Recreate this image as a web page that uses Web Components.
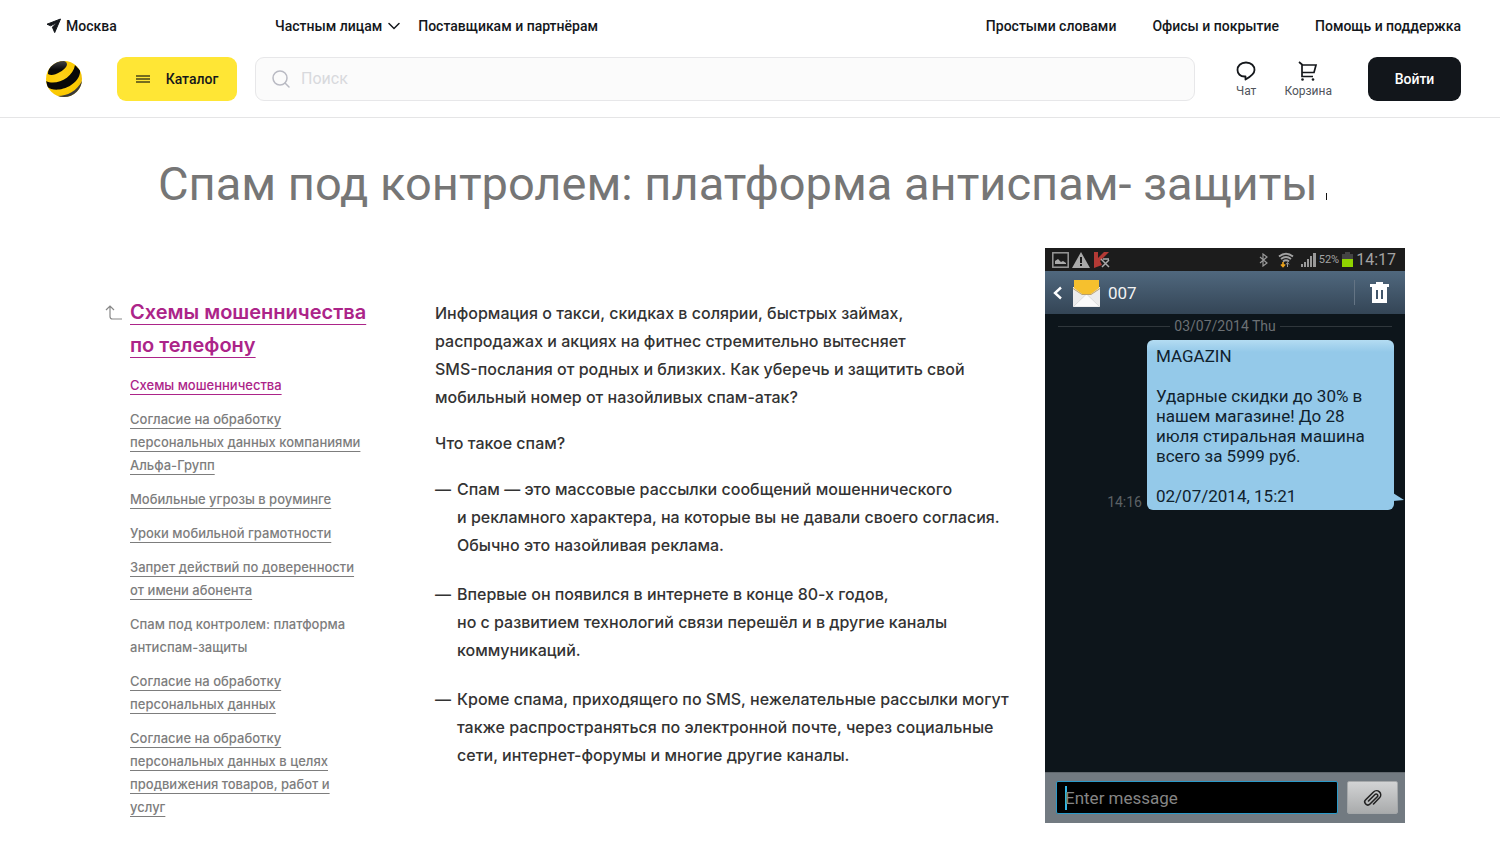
<!DOCTYPE html>
<html lang="ru">
<head>
<meta charset="utf-8">
<meta name="viewport" content="width=device-width, initial-scale=1">
<title>Спам под контролем: платформа антиспам-защиты</title>
<style>
body { margin: 0; background: #fff; color: #1f1f1f; font-family: Inter, "Liberation Sans", sans-serif; }
</style>
</head>
<body>
<site-header></site-header>
<main>
  <page-title>Спам под контролем: платформа антиспам- защиты</page-title>
  <page-columns>
    <side-nav slot="aside"></side-nav>
    <article-text></article-text>
    <phone-screen slot="media"></phone-screen>
  </page-columns>
</main>
<script>
function define(name, html) {
  const template = document.createElement('template');
  template.innerHTML = html;
  customElements.define(name, class extends HTMLElement {
    constructor() {
      super();
      this.attachShadow({ mode: 'open' }).append(template.content.cloneNode(true));
    }
  });
}

define('bee-logo', `
<style>:host{display:block;width:36px;height:36px}svg{display:block}</style>
<svg width="36" height="36" viewBox="0 0 36 36" role="img" aria-label="билайн">
  <defs>
    <clipPath id="c"><circle cx="18" cy="18" r="18"/></clipPath>
    <radialGradient id="y" cx=".42" cy=".45" r=".6"><stop offset="0" stop-color="#ffd21a"/><stop offset=".8" stop-color="#fbc900"/><stop offset="1" stop-color="#e9ba10"/></radialGradient>
    <linearGradient id="k" x1="0" y1="0" x2="0" y2="1"><stop offset="0" stop-color="#444"/><stop offset=".6" stop-color="#0a0a0a"/></linearGradient>
  </defs>
  <g clip-path="url(#c)">
    <rect width="36" height="36" fill="url(#y)"/>
    <path d="M2 13C2 5 9 -1 18 0C24 2 20 8 14 11C9 14 5 15 2 13Z" fill="url(#k)"/>
    <path d="M0 20C10 25 27 17 29 4L34 9C35 18 25 27 13 28.500C8 29 4 28 1 26Z" fill="#080808"/>
    <path d="M12 35C21 35 31 30 36 20L36 36H12Z" fill="#3a3a3a"/>
  </g>
</svg>`);

define('icon-link', `
<style>
:host{display:block}
a{display:flex;flex-direction:column;align-items:center;gap:2px;padding-top:2px;color:#50545b;font-size:12px;font-weight:400;line-height:16px;text-decoration:none}
</style>
<a href="#"><slot name="icon"></slot><slot></slot></a>`);

define('site-header', `
<style>
:host{display:block;padding:16px 39px 16px 46px;border-bottom:1px solid #e5e5e6;color:#14171b;font-family:Roboto,sans-serif;font-weight:500}
a{color:inherit;text-decoration:none;display:flex;align-items:center;white-space:nowrap}
svg{display:block;flex:none}
.top{display:flex;align-items:center;font-size:14px;line-height:20px}
.city{width:229px;gap:4px}
.left,.right{display:flex}
.left{gap:18px}
.left a{gap:6px}
.right{margin-left:auto;gap:36px}
.bar{display:flex;align-items:center;margin-top:21px}
button{display:flex;align-items:center;justify-content:center;height:44px;box-sizing:border-box;border:0;border-radius:9px;font:500 14px/20px Roboto,sans-serif;cursor:pointer}
.catalog{width:120px;margin-left:35px;gap:16px;background:#ffe635;color:#14171b}
.login{width:93px;background:#12161b;color:#fff}
.search{display:flex;align-items:center;gap:11px;flex:1;min-width:0;height:44px;box-sizing:border-box;margin:0 41px 0 18px;padding:0 16px;border:1px solid #e7e7e9;border-radius:9px;background:#fbfbfb}
input{flex:1;min-width:0;border:0;padding:0;background:none;outline:0;font:400 16px/20px Roboto,sans-serif;color:#14171b}
input::placeholder{color:#d8d9dd;opacity:1}
.tools{display:flex;gap:28px;margin-right:36px}
</style>
<header>
  <div class="top">
    <a class="city" href="#"><svg width="16" height="16" viewBox="0 0 16 16"><path d="M14.500 1L1 6.200l3.600 1.600L11 4.500 6.400 9.200 8.700 14.600Z" fill="#14171b" stroke="#14171b" stroke-linejoin="round"/></svg>Москва</a>
    <nav class="left" aria-label="Разделы">
      <a href="#">Частным лицам <svg width="12" height="8" viewBox="0 0 12 8"><path d="M1 1.500l5 5 5-5" fill="none" stroke="#14171b" stroke-width="1.500" stroke-linecap="round"/></svg></a>
      <a href="#">Поставщикам и партнёрам</a>
    </nav>
    <nav class="right" aria-label="Помощь"><a href="#">Простыми словами</a><a href="#">Офисы и покрытие</a><a href="#">Помощь и поддержка</a></nav>
  </div>
  <div class="bar">
    <a href="#"><bee-logo></bee-logo></a>
    <button class="catalog"><svg width="14" height="8" viewBox="0 0 14 8"><path d="M0 1h14M0 4h14M0 7h14" stroke="#4a4617" stroke-width="1.600"/></svg>Каталог</button>
    <label class="search"><svg width="18" height="18" viewBox="0 0 18 18" fill="none" stroke="#b9bac3" stroke-width="1.500" stroke-linecap="round"><circle cx="8" cy="8" r="7"/><path d="M13 13l4 4"/></svg><input type="search" placeholder="Поиск" aria-label="Поиск"></label>
    <div class="tools">
      <icon-link><svg slot="icon" width="20" height="20" viewBox="0 0 20 20"><path d="M9.500 18.500v-3H8.500C4.500 15.500 1.500 13 1.500 9s3-7.500 8.500-7.500 8.500 3.500 8.500 7.500-4.500 7-9 9.500Z" fill="none" stroke="#14171b" stroke-width="1.800" stroke-linejoin="round"/></svg>Чат</icon-link>
      <icon-link><svg slot="icon" width="20" height="20" viewBox="0 0 20 20"><path d="M1 1l3 2.500V15.500H15M4 4H18l-2 7.500H4" fill="none" stroke="#14171b" stroke-width="1.700"/><circle cx="4.500" cy="18.500" r="1.300" fill="#14171b"/><circle cx="15" cy="18.500" r="1.300" fill="#14171b"/></svg>Корзина</icon-link>
    </div>
    <button class="login">Войти</button>
  </div>
</header>`);

define('page-title', `
<style>
:host{display:block;padding:36px 105px 0 158px}
h1{margin:0;font-family:Roboto,sans-serif;font-size:47px;line-height:60px;font-weight:400;color:#767676;white-space:nowrap}
i{display:inline-block;width:1px;height:7px;margin-left:8px;background:#111}
</style>
<h1><slot></slot><i></i></h1>`);

define('page-columns', `
<style>
:host{display:grid;grid-template-columns:330px minmax(0,1fr) 360px;align-items:start;padding:34px 95px 21px 105px}
</style>
<slot name="aside"></slot><slot></slot><slot name="media"></slot>`);

define('side-nav', `
<style>
:host{display:block;padding-top:48px}
nav{display:grid;grid-template-columns:17px 1fr;column-gap:8px;font-size:13px;font-weight:500;line-height:23px;color:#7d7d7d}
svg{margin-top:9px}
h2{margin:0;font-size:20px;line-height:33px;font-weight:600}
ul{grid-column:2;list-style:none;margin:12px 0 0;padding:0;display:grid;gap:11px;white-space:nowrap}
a{color:inherit;text-decoration:underline 1px;text-underline-offset:4px;text-decoration-skip-ink:none}
h2 a{text-underline-offset:5px}
.v{color:#ac2489}
</style>
<nav aria-label="Статьи">
  <svg width="17" height="15" viewBox="0 0 17 15" fill="none" stroke="#888" stroke-width="1.200"><path d="M1 5l4-4 4 4M5 1v10.500a2.500 2.500 0 0 0 2.500 2.500H17"/></svg>
  <h2><a class="v" href="#">Схемы мошенничества<br>по телефону</a></h2>
  <ul>
    <li><a class="v" href="#">Схемы мошенничества</a></li>
    <li><a href="#">Согласие на обработку<br>персональных данных компаниями<br>Альфа-Групп</a></li>
    <li><a href="#">Мобильные угрозы в роуминге</a></li>
    <li><a href="#">Уроки мобильной грамотности</a></li>
    <li><a href="#">Запрет действий по доверенности<br>от имени абонента</a></li>
    <li>Спам под контролем: платформа<br>антиспам-защиты</li>
    <li><a href="#">Согласие на обработку<br>персональных данных</a></li>
    <li><a href="#">Согласие на обработку<br>персональных данных в целях<br>продвижения товаров, работ и<br>услуг</a></li>
  </ul>
</nav>`);

define('article-text', `
<style>
:host{display:block;padding-top:51px;font-size:16px;font-weight:500;line-height:28px;color:#333;white-space:nowrap}
p{margin:0 0 18px}
ul{list-style:none;margin:0;padding:0;display:grid;gap:21px}
li{display:grid;grid-template-columns:22px 1fr}
li::before{content:"—"}
</style>
<article>
  <p>Информация о такси, скидках в солярии, быстрых займах,<br>распродажах и акциях на фитнес стремительно вытесняет<br>SMS-послания от родных и близких. Как уберечь и защитить свой<br>мобильный номер от назойливых спам-атак?</p>
  <p>Что такое спам?</p>
  <ul>
    <li><span>Спам — это массовые рассылки сообщений мошеннического<br>и рекламного характера, на которые вы не давали своего согласия.<br>Обычно это назойливая реклама.</span></li>
    <li><span>Впервые он появился в интернете в конце 80-х годов,<br>но с развитием технологий связи перешёл и в другие каналы<br>коммуникаций.</span></li>
    <li><span>Кроме спама, приходящего по SMS, нежелательные рассылки могут<br>также распространяться по электронной почте, через социальные<br>сети, интернет-форумы и многие другие каналы.</span></li>
  </ul>
</article>`);

define('phone-status', `
<style>
:host{display:flex;align-items:center;gap:3px;height:23px;padding:0 9px 0 7px;background:#1c1c1c;color:#a3a3a3;font-size:16px}
small{font-size:11px}
.gap{flex:1}
svg{flex:none}
.wifi{margin:0 4px 0 7px}
</style>
<svg width="17" height="16" viewBox="0 0 17 16"><rect x=".8" y=".8" width="15.400" height="14.400" fill="none" stroke="#999" stroke-width="1.500"/><path d="M3 12V9l3-2 3 3 2-1 3 2v1Z" fill="#aaa"/></svg>
<svg width="18" height="16" viewBox="0 0 18 16"><path d="M9 0l9 16H0Z" fill="#aaa"/><path d="M9 5v6M9 12v2" stroke="#1c1c1c" stroke-width="2"/></svg>
<svg width="17" height="16" viewBox="0 0 17 16"><path d="M1 0h4v6l6-6h5L7 9l2 4-8 3Z" fill="#b33a35"/><path d="M8 7l8 8M16 8l-7 7M10 7h6" stroke="#aaa" stroke-width="1.500" fill="none"/></svg>
<span class="gap"></span>
<svg width="9" height="14" viewBox="0 0 9 14"><path d="M1 4l7 6-4 3V1l4 3-7 6" fill="none" stroke="#999" stroke-width="1.200"/></svg>
<svg class="wifi" width="16" height="16" viewBox="0 0 16 16" fill="none"><path d="M1 4.500Q8-1 15 4.500M3 7Q8 3 13 7M5 9.500Q8 7 11 9.500" stroke="#a3a3a3" stroke-width="1.800"/><path d="M9.500 15v-4M8 12.500l1.500-2 1.500 2" stroke="#999"/><path d="M5 10v4M3 12.500l2 2 2-2" stroke="#eda31b" stroke-width="1.600"/></svg>
<svg width="15" height="14" viewBox="0 0 15 14"><path d="M0 14v-3h2v3zM3 14V9h2v5zM6 14V6h2v8zM9 14V3h2v11zM12 14V0h3v14z" fill="#999"/></svg>
<small>52%</small>
<svg width="11" height="15" viewBox="0 0 11 15"><path d="M3 0h5v2h3v5H0V2h3z" fill="#444"/><path d="M0 7h11v8H0z" fill="#8fd300"/></svg>
<span>14:17</span>`);

define('sms-bubble', `
<style>
:host{display:block;position:relative;box-sizing:border-box;width:247px;padding:6px 9px 4px;border-radius:6px;background:linear-gradient(#b4dcf2,#94c9e9 12px);color:#10222e;font-size:17px;line-height:20px}
div{white-space:pre-line}
svg{position:absolute;right:-10px;bottom:9px}
</style><div><slot></slot></div><svg width="11" height="8" viewBox="0 0 11 8"><path d="M0 0l11 7-11 1Z" fill="#94c9e9"/></svg>`);

define('phone-screen', `
<style>
:host{display:flex;flex-direction:column;min-height:575px;background:#0d151b;font-family:Roboto,sans-serif}
.bar{display:flex;align-items:center;height:43px;box-sizing:border-box;padding:0 16px 0 8px;background:linear-gradient(#50687e,#344556);color:#f2f2f2;font-size:17px}
.env{margin:0 8px 0 11px}
.sep{width:1px;height:25px;margin:0 15px 0 auto;background:#647484}
.date{display:flex;align-items:center;gap:4px;margin:2px 13px 4px;color:#6b7074;font-size:14px;line-height:20px}
.date::before,.date::after{content:"";flex:1;height:1px;background:#30373c}
.msg{display:flex;align-items:flex-start;justify-content:flex-end;gap:5px;padding-right:11px;flex:1}
time{color:#5c6165;font-size:14px;line-height:18px;padding-top:153px}
form{display:flex;gap:9px;padding:8px 7px 9px 11px;border-top:1px solid #60676d;background:#727a81}
.field{display:flex;flex:1;align-items:center;min-width:0;box-sizing:border-box;height:33px;padding-left:8px;border:1px solid #2b9ac9;border-radius:2px;background:#000}
.field::before{content:"";width:2px;height:24px;margin-right:-2px;background:#33b5e5}
input{flex:1;min-width:0;padding:0;border:0;outline:0;background:none;color:#ccc;font:17px/22px Roboto,sans-serif}
input::placeholder{color:#858585;opacity:1}
button{display:grid;place-items:center;width:51px;height:33px;padding:0;border:1px solid #a5a8aa;border-radius:2px;background:linear-gradient(#d2d3d4,#a9abac)}
</style>
<phone-status></phone-status>
<div class="bar">
  <svg width="9" height="14" viewBox="0 0 9 14"><path d="M8 1.500L2 7l6 5.500" fill="none" stroke="#fff" stroke-width="2.400"/></svg>
  <svg class="env" width="27" height="28" viewBox="0 0 27 28"><path d="M0 8h27v20H0Z" fill="#ececec"/><path d="M0 28l13.500-13L27 28Z" fill="#fafafa" stroke="#ccc" stroke-width=".6"/><path d="M1 1h25v8l-8 6H9L1 9Z" fill="#f6c02e"/><path d="M0 9l9 6h9l9-6v1l-9 6H9l-9-6Z" fill="#bba16a"/></svg>
  <span>007</span>
  <span class="sep"></span>
  <svg width="19" height="21" viewBox="0 0 19 21"><path d="M6 0h7v2h6v3h-2v16H2V5H0V2h6Z" fill="#fff"/><path d="M7 8v9M12 8v9" stroke="#42566a" stroke-width="2"/></svg>
</div>
<div class="date">03/07/2014 Thu</div>
<div class="msg"><time>14:16</time><sms-bubble>MAGAZIN

Ударные скидки до 30% в
нашем магазине! До 28
июля стиральная машина
всего за 5999 руб.

02/07/2014, 15:21</sms-bubble></div>
<form>
  <label class="field"><input placeholder="Enter message" aria-label="Enter message"></label>
  <button type="button" aria-label="Прикрепить"><svg width="20" height="20" viewBox="0 0 20 20"><path d="M6 12l6.500-6.500a1.600 1.600 0 0 1 2.300 2.300L7.500 15a3 3 0 0 1-4.300-4.300L11 3a4 4 0 0 1 6 5.800L11 15" transform="translate(-.5 1)" fill="none" stroke="#222" stroke-width="1.600" stroke-linecap="round"/></svg></button>
</form>`);
</script>
</body>
</html>
